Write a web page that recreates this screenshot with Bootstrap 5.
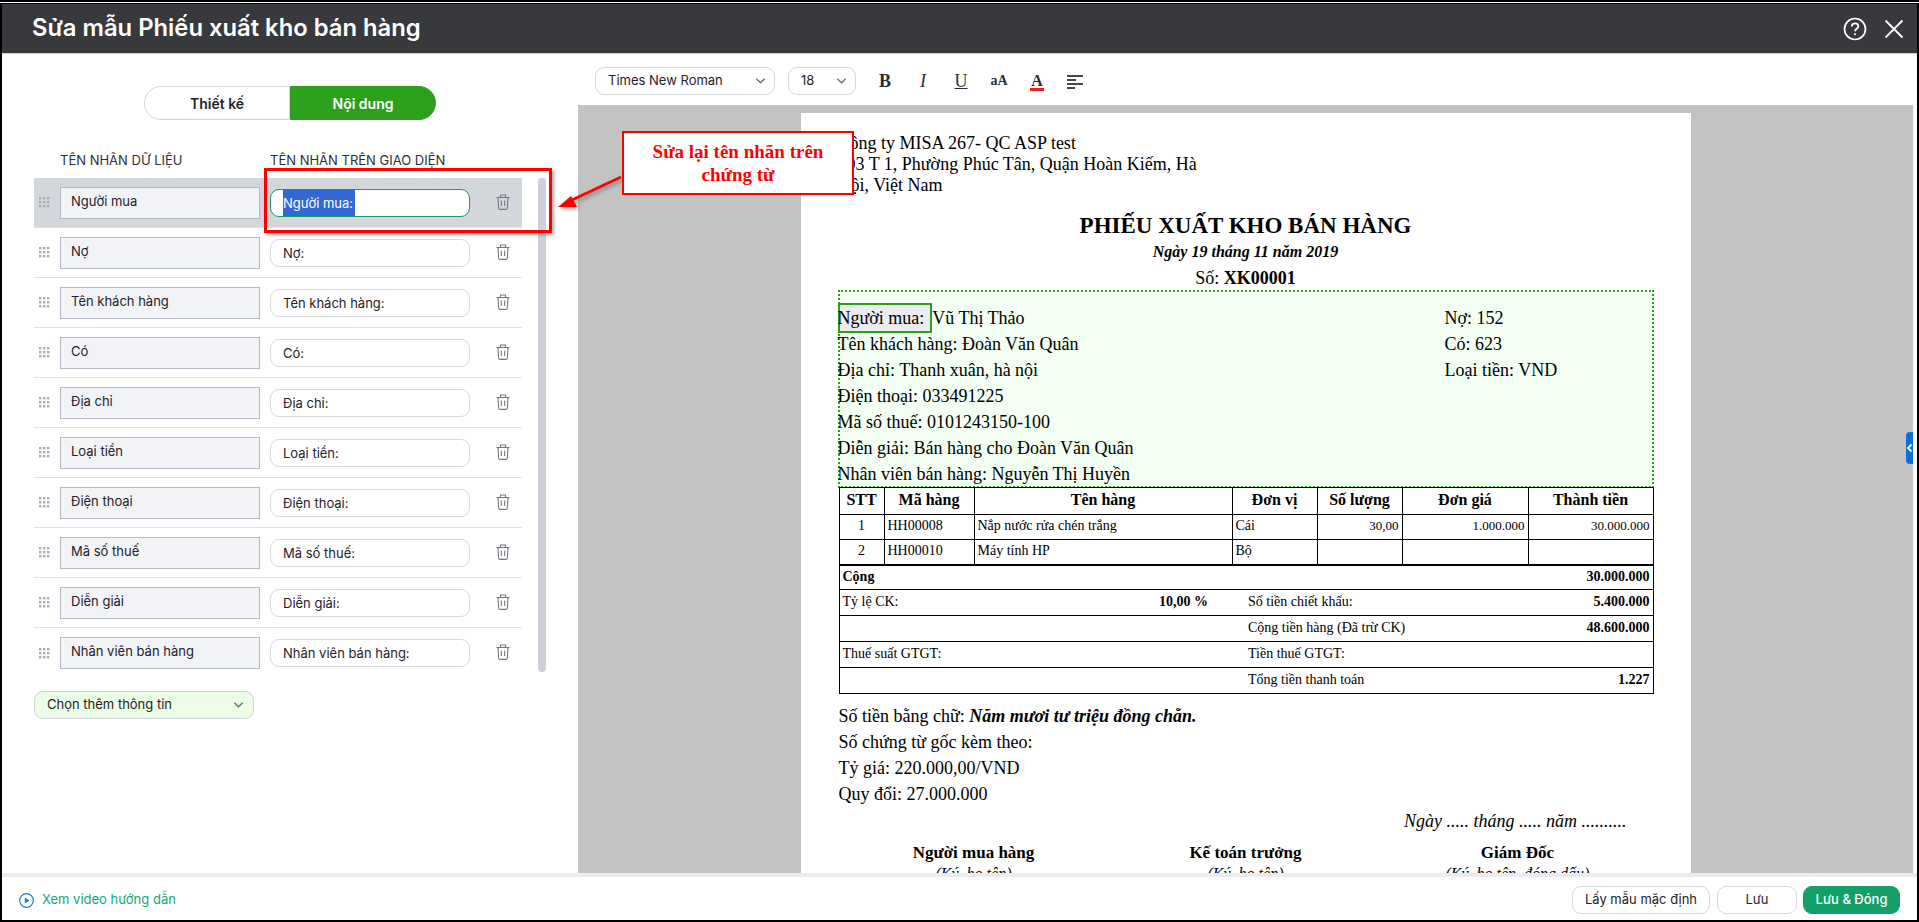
<!DOCTYPE html>
<html lang="vi">
<head>
<meta charset="UTF-8">
<title>Sửa mẫu Phiếu xuất kho bán hàng</title>
<link href="https://cdn.jsdelivr.net/npm/bootstrap@5.3.0/dist/css/bootstrap.min.css" rel="stylesheet">
<style>
    html, body { height: 922px; overflow: hidden; }
    body { background: #000; font-family: Inter, "Liberation Sans", sans-serif; font-size: 13px; color: #1f2229; position: relative; border-top: 2px solid #000; }
    .top-line { height: 1px; background: #fff; margin-bottom: 1px; }
    .app-win { height: 916px; margin: 0 2px; background: #fff; }
    .app-head { height: 50px; background: #38393d; color: #fff; padding: 0 12px 0 30px; border-bottom: 1px solid #c9c9c9; }
    .app-title { font-size: 23.8px; font-weight: 600; margin: 0; }
    .main-area { height: 819px; }
    .side-pane { width: 576px; flex: none; padding-top: 32px; }
    .mode-tabs { width: 292px; height: 34px; margin: 0 auto; }
    .mode-tabs .btn { width: 146px; height: 34px; padding: 0; font-size: 14px; font-weight: 600; border-radius: 17px 0 0 17px; border: 1px solid #d3d5db; color: #1f2229; background: #fff; }
    .mode-tabs .btn.on { border-radius: 0 17px 17px 0; background: #2ca01c; border-color: #2ca01c; color: #fff; }
    .col-heads { padding: 24px 0 0 58px; height: 58px; font-size: 13px; color: #2b2f38; line-height: 32px; }
    .col-heads span:first-child { width: 210px; }
    .rows-wrap { padding-left: 32px; }
    .rows-list { width: 488px; }
    .field-row { height: 50px; padding-left: 5px; border-bottom: 1px solid #e0e1e5; }
    .field-row.picked { background: #d3d6db; }
    .field-row:last-child { border-bottom: 0; }
    .grip-ic { width: 11px; height: 11px; margin-right: 10px; flex: none; }
    .name-box { width: 200px; height: 32px; background: #f2f3f7; border: 1px solid #b5b9c5; padding: 0 10px 3px; line-height: 27px; font-size: 13px; margin-right: 10px; flex: none; }
    .label-box { width: 200px; height: 28px; background: #fff; border: 1px solid #d6d8dd; border-radius: 9px; padding: 0 12px; line-height: 26px; font-size: 13px; flex: none; }
    .label-box.focused { border-color: #12a068; }
    .label-box.focused span { display: inline-block; background: #3367d1; color: #fff; height: 26px; padding-right: 2px; }
    .trash-ic { width: 14px; height: 16px; margin: -2px 0 0 26px; color: #737780; flex: none; }
    .scroll-thumb { width: 8px; height: 494px; margin-left: 16px; background: #cdd0d6; border-radius: 4px; }
    .more-select { width: 220px; height: 28px; margin: 13px 0 0 32px; background: #ebfde5; border: 1px solid #cfd2d8; border-radius: 9px; padding: 0 9px 0 12px; }
    .doc-pane { min-width: 0; }
    .tool-bar { height: 51px; padding: 2px 0 0 17px; }
    .tool-select { height: 28px; border: 1px solid #d6d8dd; border-radius: 9px; padding: 0 8px 0 12px; font-size: 13px; }
    .font-pick { width: 180px; margin-right: 13px; }
    .size-pick { width: 68px; margin-right: 10px; }
    .tool-btn { width: 38px; text-align: center; font-family: "Liberation Serif", serif; font-size: 18px; line-height: 20px; color: #2b2d33; }
    .tool-btn.fs-small { font-size: 14px; font-weight: 700; }
    .color-a { display: inline-block; font-size: 16px; line-height: 14px; font-weight: 700; border-bottom: 3px solid #f01b24; padding: 0 1px; }
    .gray-wrap { height: 768px; background: #c3c3c3; padding-top: 8px; margin-right: 4px; position: relative; overflow: hidden; }
    .sheet { width: 890px; height: 900px; margin: 0 auto; background: #fff; padding: 20px 37px 0; font-family: "Liberation Serif", serif; font-size: 18px; color: #000; }
    .firm-lines { line-height: 21px; }
    .doc-title { font-size: 23px; font-weight: 700; text-align: center; line-height: 30px; margin-top: 15px; }
    .doc-date { font-size: 16px; font-weight: 700; font-style: italic; text-align: center; line-height: 20px; margin-top: 1px; }
    .doc-no { text-align: center; line-height: 24px; margin-top: 4px; }
    .buyer-box { height: 198px; background: #f3fff2; border: 2px dotted #2ca01c; padding-top: 13px; line-height: 26px; }
    .buyer-left { width: 607px; margin-left: -2px; }
    .tag-on { display: inline-block; background: #ebebf0; box-shadow: inset 0 0 0 2px #2ca01c; margin: -2px 0; padding: 2px 8px 2px 0; line-height: 26px; }
    .doc-tbl.table { width: 814px; margin: -1px 0 0 1px; table-layout: fixed; border-color: #000; font-size: 14px; }
    .doc-tbl.table > :not(caption) > * > * { padding: 0 3px 2px; border-color: #000; border-width: 1px; color: #000; background: transparent; box-shadow: none; vertical-align: middle; line-height: 20px; }
    .doc-tbl.table thead th { font-size: 16px; text-align: center; height: 27px; }
    .doc-tbl.table tbody td { height: 25px; }
    .doc-tbl.table tbody td.num-cell { font-size: 13px; }
    .sum-tbl.table { margin-top: 0; }
    .sum-tbl.table > tbody > tr > * { border-top: 0; border-left: 0; border-right: 0; }
    .sum-tbl.table > tbody > tr > *:first-child { border-left: 1px solid #000; }
    .sum-tbl.table > tbody > tr > *:last-child { border-right: 1px solid #000; }
    .sum-tbl.table tbody td { height: 26px; }
    .sum-tbl.table tbody tr:first-child td { height: 24px; }
    .after-lines { line-height: 26px; margin: 9px 0 0 1px; }
    .date-right { text-align: right; padding-right: 27px; line-height: 26px; font-style: italic; margin-top: 1px; }
    .sign-row { margin-top: 6px; line-height: 26px; font-size: 17px; }
    .sign-row small { display: block; font-size: 16px; font-style: italic; line-height: 16px; }
    .side-handle { position: absolute; right: 0; top: 327px; width: 7px; height: 32px; background: #0d6fdf; border-radius: 4px 0 0 4px; }
    .foot-band { height: 4px; background: #ebecf0; }
    .app-foot { height: 43px; padding: 3px 17px 0 17px; }
    .video-link { color: #14a77c; font-size: 13px; text-decoration: none; }
    .foot-btn.btn { height: 28px; padding: 0; font-size: 13px; border: 1px solid #d6d8dd; border-radius: 9px; color: #1f2229; background: #fff; }
    .foot-btn.dflt { width: 138px; margin-right: 7px; }
    .foot-btn.save { width: 80px; margin-right: 6px; }
    .foot-btn.done { width: 97px; background: #12a068; border-color: #12a068; color: #fff; font-weight: 500; }
    .note-frame { position: absolute; left: 264px; top: 166px; width: 288px; height: 65px; border: 3px solid #f00; box-shadow: 2px 2px 3px rgba(0,0,0,.35); }
    .note-box { position: absolute; left: 622px; top: 129px; width: 232px; height: 64px; background: #fff; border: 2px solid #f00; color: #f00; font-family: "Liberation Serif", serif; font-size: 19px; font-weight: 700; text-align: center; line-height: 23px; padding-top: 7px; }
    .note-arrow { position: absolute; left: 550px; top: 163px; width: 75px; height: 50px; filter: drop-shadow(2px 2px 2px rgba(0,0,0,.4)); }
</style>
</head>
<body>
<svg width="0" height="0" class="position-absolute">
    <symbol id="grip" viewBox="0 0 11 11"><g fill="#a9adb6"><rect x="0" y="0" width="2.4" height="2.4"/><rect x="4" y="0" width="2.4" height="2.4"/><rect x="8" y="0" width="2.4" height="2.4"/><rect x="0" y="4" width="2.4" height="2.4"/><rect x="4" y="4" width="2.4" height="2.4"/><rect x="8" y="4" width="2.4" height="2.4"/><rect x="0" y="8" width="2.4" height="2.4"/><rect x="4" y="8" width="2.4" height="2.4"/><rect x="8" y="8" width="2.4" height="2.4"/></g></symbol>
    <symbol id="trash" viewBox="0 0 14 16"><path d="M.5 3.500h13M4.500 3.500V1h5v2.500M2 3.500l.6 10.200c.1 1 .7 1.700 1.600 1.700h5.600c.9 0 1.500-.7 1.600-1.700L12 3.500M5.300 6.500v5.500M8.700 6.500v5.500" fill="none" stroke="currentColor" stroke-width="1.100"/></symbol>
    <symbol id="chev" viewBox="0 0 12 8"><path d="M1.500 1.500 6 6l4.500-4.500" fill="none" stroke="#6c7079" stroke-width="1.600"/></symbol>
</svg>
<div class="top-line"></div>
<div class="app-win d-flex flex-column">
    <div class="app-head d-flex align-items-center justify-content-between">
        <h1 class="app-title">Sửa mẫu Phiếu xuất kho bán hàng</h1>
        <div class="d-flex align-items-center gap-3">
            <svg width="24" height="24" viewBox="0 0 24 24" fill="none" stroke="#fff" stroke-width="1.700"><circle cx="12" cy="12" r="10.500"/><path d="M8.800 9.500c0-2 1.500-3.200 3.300-3.200s3.200 1.200 3.200 2.900c0 2.500-3.300 2.500-3.300 5"/><path d="M12 16.300v2"/></svg>
            <svg width="22" height="22" viewBox="0 0 22 22" fill="none" stroke="#fff" stroke-width="1.800"><path d="M2.500 2.500l17 17M19.500 2.500l-17 17"/></svg>
        </div>
    </div>
    <div class="main-area d-flex">
        <div class="side-pane">
            <div class="mode-tabs d-flex">
                <button class="btn" type="button">Thiết kế</button>
                <button class="btn on" type="button">Nội dung</button>
            </div>
            <div class="col-heads d-flex">
                <span>TÊN NHÃN DỮ LIỆU</span>
                <span>TÊN NHÃN TRÊN GIAO DIỆN</span>
            </div>
            <div class="rows-wrap d-flex">
                <div class="rows-list">
                    <div class="field-row picked d-flex align-items-center">
                        <svg class="grip-ic"><use href="#grip"/></svg>
                        <div class="name-box">Người mua</div>
                        <div class="label-box focused"><span>Người mua:</span></div>
                        <svg class="trash-ic"><use href="#trash"/></svg>
                    </div>
                    <div class="field-row d-flex align-items-center">
                        <svg class="grip-ic"><use href="#grip"/></svg>
                        <div class="name-box">Nợ</div>
                        <div class="label-box">Nợ:</div>
                        <svg class="trash-ic"><use href="#trash"/></svg>
                    </div>
                    <div class="field-row d-flex align-items-center">
                        <svg class="grip-ic"><use href="#grip"/></svg>
                        <div class="name-box">Tên khách hàng</div>
                        <div class="label-box">Tên khách hàng:</div>
                        <svg class="trash-ic"><use href="#trash"/></svg>
                    </div>
                    <div class="field-row d-flex align-items-center">
                        <svg class="grip-ic"><use href="#grip"/></svg>
                        <div class="name-box">Có</div>
                        <div class="label-box">Có:</div>
                        <svg class="trash-ic"><use href="#trash"/></svg>
                    </div>
                    <div class="field-row d-flex align-items-center">
                        <svg class="grip-ic"><use href="#grip"/></svg>
                        <div class="name-box">Địa chỉ</div>
                        <div class="label-box">Địa chỉ:</div>
                        <svg class="trash-ic"><use href="#trash"/></svg>
                    </div>
                    <div class="field-row d-flex align-items-center">
                        <svg class="grip-ic"><use href="#grip"/></svg>
                        <div class="name-box">Loại tiền</div>
                        <div class="label-box">Loại tiền:</div>
                        <svg class="trash-ic"><use href="#trash"/></svg>
                    </div>
                    <div class="field-row d-flex align-items-center">
                        <svg class="grip-ic"><use href="#grip"/></svg>
                        <div class="name-box">Điện thoại</div>
                        <div class="label-box">Điện thoại:</div>
                        <svg class="trash-ic"><use href="#trash"/></svg>
                    </div>
                    <div class="field-row d-flex align-items-center">
                        <svg class="grip-ic"><use href="#grip"/></svg>
                        <div class="name-box">Mã số thuế</div>
                        <div class="label-box">Mã số thuế:</div>
                        <svg class="trash-ic"><use href="#trash"/></svg>
                    </div>
                    <div class="field-row d-flex align-items-center">
                        <svg class="grip-ic"><use href="#grip"/></svg>
                        <div class="name-box">Diễn giải</div>
                        <div class="label-box">Diễn giải:</div>
                        <svg class="trash-ic"><use href="#trash"/></svg>
                    </div>
                    <div class="field-row d-flex align-items-center">
                        <svg class="grip-ic"><use href="#grip"/></svg>
                        <div class="name-box">Nhân viên bán hàng</div>
                        <div class="label-box">Nhân viên bán hàng:</div>
                        <svg class="trash-ic"><use href="#trash"/></svg>
                    </div>
                </div>
                <div class="scroll-thumb"></div>
            </div>
            <div class="more-select d-flex align-items-center justify-content-between">
                <span>Chọn thêm thông tin</span>
                <svg width="11" height="8"><use href="#chev"/></svg>
            </div>
        </div>

        <div class="doc-pane flex-grow-1">
            <div class="tool-bar d-flex align-items-center">
                <div class="tool-select font-pick d-flex align-items-center justify-content-between"><span>Times New Roman</span><svg width="11" height="8"><use href="#chev"/></svg></div>
                <div class="tool-select size-pick d-flex align-items-center justify-content-between"><span>18</span><svg width="11" height="8"><use href="#chev"/></svg></div>
                <div class="tool-btn fw-bold">B</div>
                <div class="tool-btn fst-italic">I</div>
                <div class="tool-btn text-decoration-underline">U</div>
                <div class="tool-btn fs-small">aA</div>
                <div class="tool-btn"><span class="color-a">A</span></div>
                <div class="tool-btn"><svg width="16" height="16" viewBox="0 0 16 16" fill="#44474e"><rect y="1" width="16" height="2"/><rect y="5" width="9" height="2"/><rect y="9" width="16" height="2"/><rect y="13" width="8" height="2"/></svg></div>
            </div>
            <div class="gray-wrap">
                <div class="sheet">
                    <div class="firm-lines">
                        <div>Công ty MISA 267- QC ASP test</div>
                        <div>103 T 1, Phường Phúc Tân, Quận Hoàn Kiếm, Hà</div>
                        <div>Nội, Việt Nam</div>
                    </div>
                    <div class="doc-title">PHIẾU XUẤT KHO BÁN HÀNG</div>
                    <div class="doc-date">Ngày 19 tháng 11 năm 2019</div>
                    <div class="doc-no">Số: <b>XK00001</b></div>
                    <div class="buyer-box d-flex">
                        <div class="buyer-left">
                            <div><span class="tag-on">Người mua:</span>Vũ Thị Thảo</div>
                            <div>Tên khách hàng: Đoàn Văn Quân</div>
                            <div>Địa chỉ: Thanh xuân, hà nội</div>
                            <div>Điện thoại: 033491225</div>
                            <div>Mã số thuế: 0101243150-100</div>
                            <div>Diễn giải: Bán hàng cho Đoàn Văn Quân</div>
                            <div>Nhân viên bán hàng: Nguyễn Thị Huyền</div>
                        </div>
                        <div>
                            <div>Nợ: 152</div>
                            <div>Có: 623</div>
                            <div>Loại tiền: VND</div>
                        </div>
                    </div>
                    <table class="table table-bordered doc-tbl">
                        <colgroup><col style="width:45px"><col style="width:90px"><col style="width:258px"><col style="width:85px"><col style="width:85px"><col style="width:126px"><col style="width:125px"></colgroup>
                        <thead>
                            <tr><th>STT</th><th>Mã hàng</th><th>Tên hàng</th><th>Đơn vị</th><th>Số lượng</th><th>Đơn giá</th><th>Thành tiền</th></tr>
                        </thead>
                        <tbody>
                            <tr><td class="text-center">1</td><td>HH00008</td><td>Nắp nước rửa chén trắng</td><td>Cái</td><td class="text-end num-cell">30,00</td><td class="text-end num-cell">1.000.000</td><td class="text-end num-cell">30.000.000</td></tr>
                            <tr><td class="text-center">2</td><td>HH00010</td><td>Máy tính HP</td><td>Bộ</td><td></td><td></td><td></td></tr>
                        </tbody>
                    </table>
                    <table class="table table-bordered doc-tbl sum-tbl">
                        <colgroup><col style="width:317px"><col style="width:89px"><col style="width:273px"><col style="width:135px"></colgroup>
                        <tbody>
                            <tr><td colspan="3" class="fw-bold">Cộng</td><td class="text-end fw-bold">30.000.000</td></tr>
                            <tr><td>Tỷ lệ CK:</td><td class="fw-bold">10,00 %</td><td>Số tiền chiết khấu:</td><td class="text-end fw-bold">5.400.000</td></tr>
                            <tr><td></td><td></td><td>Cộng tiền hàng (Đã trừ CK)</td><td class="text-end fw-bold">48.600.000</td></tr>
                            <tr><td>Thuế suất GTGT:</td><td></td><td>Tiền thuế GTGT:</td><td></td></tr>
                            <tr><td></td><td></td><td>Tổng tiền thanh toán</td><td class="text-end fw-bold">1.227</td></tr>
                        </tbody>
                    </table>
                    <div class="after-lines">
                        <div>Số tiền bằng chữ: <b><i>Năm mươi tư triệu đồng chẵn.</i></b></div>
                        <div>Số chứng từ gốc kèm theo:</div>
                        <div>Tỷ giá: 220.000,00/VND</div>
                        <div>Quy đổi: 27.000.000</div>
                    </div>
                    <div class="date-right">Ngày ..... tháng ..... năm ..........</div>
                    <div class="row g-0 text-center sign-row">
                        <div class="col-4"><b>Người mua hàng</b><small>(Ký, họ tên)</small></div>
                        <div class="col-4"><b>Kế toán trưởng</b><small>(Ký, họ tên)</small></div>
                        <div class="col-4"><b>Giám Đốc</b><small>(Ký, họ tên, đóng dấu)</small></div>
                    </div>
                </div>
                <div class="side-handle d-flex align-items-center"><svg width="7" height="12" viewBox="0 0 7 12"><path d="M5.500 2.500 2 6l3.500 3.500" fill="none" stroke="#fff" stroke-width="1.800"/></svg></div>
            </div>
        </div>
    </div>
    <div class="foot-band"></div>
    <div class="app-foot d-flex align-items-center justify-content-between">
        <a class="video-link d-flex align-items-center gap-2" href="#">
            <svg width="15" height="15" viewBox="0 0 15 15"><circle cx="7.500" cy="7.500" r="6.800" fill="none" stroke="#1a7fc7" stroke-width="1.200"/><path d="M5.800 4.600v5.800l4.600-2.900z" fill="#1a7fc7"/></svg>
            Xem video hướng dẫn
        </a>
        <div class="d-flex">
            <button class="btn foot-btn dflt" type="button">Lấy mẫu mặc định</button>
            <button class="btn foot-btn save" type="button">Lưu</button>
            <button class="btn foot-btn done" type="button">Lưu &amp; Đóng</button>
        </div>
    </div>
</div>

<div class="note-frame"></div>
<svg class="note-arrow" viewBox="0 0 75 50"><path d="M71 12 22 35" stroke="#f00" stroke-width="2.500"/><path d="M8 42 21 31l6 11z" fill="#f00"/></svg>
<div class="note-box">Sửa lại tên nhãn trên<br>chứng từ</div>
</body>
</html>
